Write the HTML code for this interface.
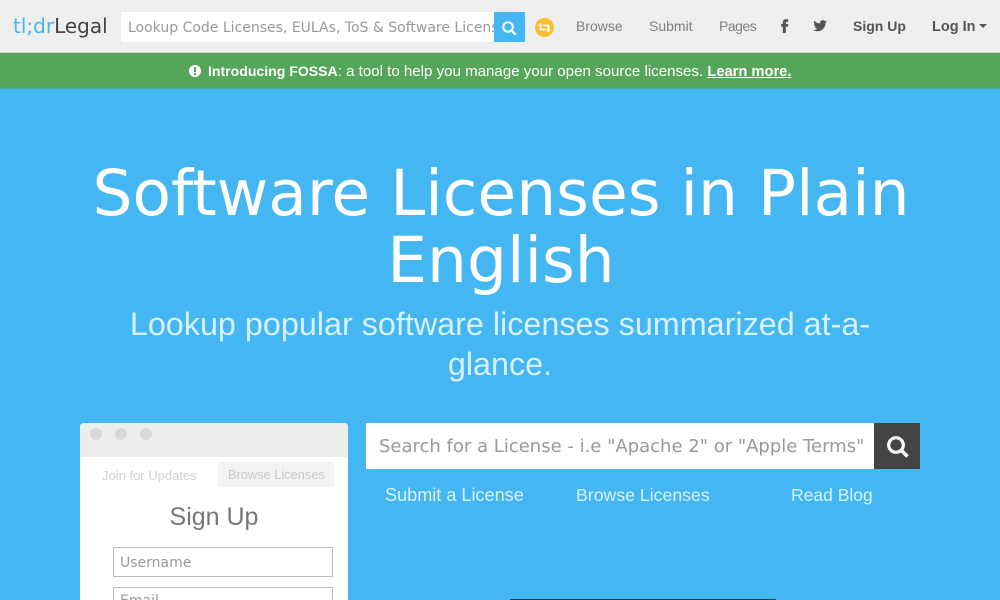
<!DOCTYPE html>
<html><head><meta charset="utf-8"><style>
html,body{margin:0;padding:0;width:1000px;height:600px;overflow:hidden}
#p{width:1000px;height:600px;overflow:hidden;position:relative;background:#44b6f1;font-family:"Liberation Sans",sans-serif}
.a{position:absolute;white-space:nowrap;line-height:1}
.d{font-family:"DejaVu Sans",sans-serif}
.c{text-align:center}
</style></head><body><div id="p">
<div class="a" style="left:0;top:0;width:1000px;height:52px;background:#eeeeee;border-bottom:1px solid #d6d6d6"></div>
<div class="a d" style="left:13px;top:16px;font-size:20px;color:#44b6f1">tl;dr<span style="color:#444">Legal</span></div>
<div class="a" style="left:121px;top:12px;width:373px;height:30px;background:#fff;overflow:hidden"><div class="a d" style="left:7px;top:9px;font-size:14px;color:#999">Lookup Code Licenses, EULAs, ToS &amp; Software Licenses</div></div>
<div class="a" style="left:494px;top:12px;width:31px;height:30px;background:#44b6f1"></div>
<svg class="a" style="left:501px;top:20px" width="16" height="16" viewBox="0 0 16 16"><circle cx="7" cy="7" r="4.8" fill="none" stroke="#fff" stroke-width="2"/><path d="M10.5 10.5L14.5 14.5" stroke="#fff" stroke-width="2.4"/></svg>
<div class="a" style="left:535px;top:18px;width:19px;height:19px;border-radius:50%;background:#f8bf2f"></div>
<svg class="a" style="left:538px;top:22px" width="13" height="11" viewBox="0 0 13 11"><path d="M2.500 2v5.500h5M10.500 9V3.500h-5" fill="none" stroke="#fff" stroke-width="1.800"/><path d="M0 3.500L2.500 1 5 3.500zM8 7.500l2.500 2.500L13 7.500z" fill="#fff"/></svg>
<div class="a" style="left:576px;top:19px;font-size:14px;color:#808080">Browse</div>
<div class="a" style="left:649px;top:19px;font-size:14px;color:#808080">Submit</div>
<div class="a" style="left:719px;top:19px;font-size:14px;letter-spacing:-.5px;color:#808080">Pages</div>
<svg class="a" style="left:781px;top:19px" width="8" height="14" viewBox="0 0 8 14"><path d="M1.800 14V7.800H.2V5h1.600V3.400C1.800 1.300 3 .2 4.900.2c.9 0 1.700.1 2.300.2v2.500H5.900c-.8 0-1 .4-1 1V5h2.400l-.4 2.800h-2V14z" fill="#555"/></svg>
<svg class="a" style="left:813px;top:20px" width="14" height="12" viewBox="0 0 14 12"><path d="M14 1.500c-.5.2-1 .4-1.600.4.600-.3 1-.8 1.200-1.500-.5.3-1.100.6-1.800.7C11.300.5 10.600.1 9.800.1 8.200.1 7 1.400 7 2.900c0 .2 0 .4.100.6C4.700 3.400 2.700 2.300 1.300.6 1 1 .9 1.500.9 2c0 1 .5 1.800 1.200 2.300-.5 0-.9-.1-1.300-.3 0 1.400 1 2.500 2.300 2.800-.5.100-1 .1-1.300 0 .4 1.100 1.400 1.900 2.600 1.900C3.400 9.500 1.800 10.100 0 9.900c1.300.8 2.700 1.300 4.400 1.300 5.300 0 8.200-4.400 8.200-8.200v-.4c.6-.5 1-1 1.400-1.600z" fill="#555"/></svg>
<div class="a" style="left:853px;top:19px;font-size:14px;font-weight:bold;color:#555">Sign Up</div>
<div class="a" style="left:932px;top:20px;font-size:14.500px;font-weight:bold;color:#555">Log In</div>
<div class="a" style="left:979px;top:24px;width:0;height:0;border-left:4px solid transparent;border-right:4px solid transparent;border-top:4px solid #555"></div>

<div class="a" style="left:0;top:53px;width:1000px;height:35px;background:#55a65a;border-bottom:1px solid #48a9a6"></div>
<div class="a" style="left:189px;top:65px;width:12px;height:12px;border-radius:50%;background:#fff"></div>
<div class="a" style="left:194px;top:67px;width:2px;height:5px;background:#55a65a"></div>
<div class="a" style="left:194px;top:73px;width:2px;height:2px;background:#55a65a"></div>
<div class="a" style="left:208px;top:64px;font-size:15.080px;color:#fff"><b style="font-size:14.070px">Introducing FOSSA</b>: a tool to help you manage your open source licenses. <b style="font-size:14.700px;text-decoration:underline">Learn more.</b></div>

<div class="a d c" style="left:1px;top:160px;width:1000px;font-size:63px;color:#fff;line-height:67px">Software Licenses in Plain<br>English</div>
<div class="a c" style="left:0;top:304px;width:1000px;font-size:32.350px;line-height:40px;color:#d8f1fe;font-weight:normal">Lookup popular software licenses summarized at-a-<br>glance.</div>

<div class="a" style="left:80px;top:423px;width:268px;height:177px;background:#fff;border-radius:4px 4px 0 0"></div>
<div class="a" style="left:80px;top:423px;width:268px;height:34px;background:#eceeee;border-radius:4px 4px 0 0"></div>
<div class="a" style="left:90px;top:428px;width:12px;height:12px;border-radius:50%;background:#d8d8d8"></div>
<div class="a" style="left:115px;top:428px;width:12px;height:12px;border-radius:50%;background:#d8d8d8"></div>
<div class="a" style="left:140px;top:428px;width:12px;height:12px;border-radius:50%;background:#d8d8d8"></div>
<div class="a" style="left:102px;top:469px;font-size:13px;color:#d0d0d0">Join for Updates</div>
<div class="a" style="left:218px;top:462px;width:116px;height:25px;background:#f3f3f3"></div>
<div class="a" style="left:228px;top:469px;font-size:12.800px;color:#c8c8c8">Browse Licenses</div>
<div class="a c" style="left:80px;top:505px;width:268px;font-size:25px;color:#777">Sign Up</div>
<div class="a" style="left:113px;top:547px;width:218px;height:28px;border:1px solid #bbb;background:#fff"></div>
<div class="a d" style="left:120px;top:556px;font-size:14px;color:#999">Username</div>
<div class="a" style="left:113px;top:587px;width:218px;height:28px;border:1px solid #bbb;background:#fff;overflow:hidden"><div class="a d" style="left:6px;top:6px;font-size:14px;color:#999">Email</div></div>

<div class="a" style="left:366px;top:423px;width:508px;height:46px;background:#fff"></div>
<div class="a d" style="left:379px;top:438px;font-size:18px;color:#999">Search for a License - i.e "Apache 2" or "Apple Terms"</div>
<div class="a" style="left:874px;top:423px;width:46px;height:46px;background:#444"></div>
<svg class="a" style="left:886px;top:435px" width="23" height="23" viewBox="0 0 23 23"><circle cx="10" cy="10" r="7.300" fill="none" stroke="#fff" stroke-width="3.200"/><path d="M15.500 15.500L21.500 21.500" stroke="#fff" stroke-width="3.600"/></svg>
<div class="a" style="left:385px;top:486px;font-size:18.100px;color:#d8f2ff">Submit a License</div>
<div class="a" style="left:576px;top:487px;font-size:17.700px;color:#d8f2ff">Browse Licenses</div>
<div class="a" style="left:791px;top:487px;font-size:17.500px;color:#d8f2ff">Read Blog</div>
<div class="a" style="left:510px;top:599px;width:266px;height:1px;background:#0d3f5c"></div>
</div></body></html>
